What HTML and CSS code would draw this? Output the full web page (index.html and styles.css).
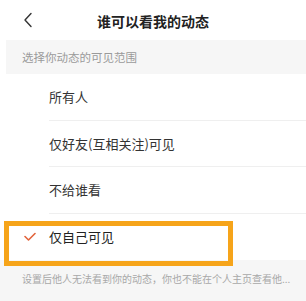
FILE: index.html
```html
<!DOCTYPE html>
<html lang="zh-CN">
<head>
  <meta charset="UTF-8">
  <meta name="viewport" content="width=device-width, initial-scale=1.0">
  <title>谁可以看我的动态</title>
  <link rel="stylesheet" href="styles.css">
</head>
<body>
  <div class="page">
    <div class="topbar">
      <span class="back">
        <svg width="10" height="16" viewBox="0 0 10 16"><path d="M8 1.5 L2 8 L8 14.5" fill="none" stroke="#333" stroke-width="1.4" stroke-linecap="round" stroke-linejoin="round"/></svg>
      </span>
      <h1>谁可以看我的动态</h1>
    </div>

    <div class="section-label">选择你动态的可见范围</div>

    <ul class="options">
      <li><span class="check"></span><span class="text">所有人</span></li>
      <li><span class="check"></span><span class="text">仅好友(互相关注)可见</span></li>
      <li><span class="check"></span><span class="text">不给谁看</span></li>
      <li class="selected">
        <span class="check">
          <svg width="12" height="10" viewBox="0 0 12 10"><path d="M1 4.5 L4.5 8 L11 1.5" fill="none" stroke="#e2643c" stroke-width="1.6" stroke-linecap="round" stroke-linejoin="round"/></svg>
        </span>
        <span class="text">仅自己可见</span>
        <div class="mark"></div>
      </li>
    </ul>

    <div class="footer">
      <p class="tip">设置后他人无法看到你的动态，你也不能在个人主页查看他...</p>
    </div>
  </div>
</body>
</html>
```

FILE: styles.css
```css
* {
  margin: 0;
  padding: 0;
  box-sizing: border-box;
}

body {
  font-family: "Noto Sans CJK SC", "Noto Sans", sans-serif;
  background: #fff;
  width: 306px;
  height: 301px;
  overflow: hidden;
}

.page {
  display: flex;
  flex-direction: column;
  height: 301px;
}

.topbar {
  height: 40px;
  display: flex;
  align-items: center;
  justify-content: center;
  position: relative;
  background: #fff;
}

.back {
  position: absolute;
  left: 23px;
  top: 12px;
  display: flex;
}

.topbar h1 {
  font-size: 14px;
  font-weight: bold;
  color: #222;
  margin-top: 2px;
}

.section-label {
  height: 34px;
  margin-left: 6px;
  padding-left: 16px;
  background: #f6f6f6;
  color: #9a9a9a;
  font-size: 11.5px;
  display: flex;
  align-items: center;
}

.options {
  list-style: none;
  background: #fff;
}

.options li {
  height: 46.5px;
  display: flex;
  align-items: center;
  position: relative;
}

.options li .check {
  width: 49px;
  display: flex;
  justify-content: flex-end;
  padding-right: 13px;
}

.options li .text {
  flex: 1;
  height: 100%;
  display: flex;
  align-items: center;
  font-size: 13px;
  color: #333;
  border-bottom: 1px solid #efefef;
}

.options li.selected .text {
  border-bottom: none;
  color: #222;
}

.mark {
  position: absolute;
  left: 4px;
  top: 7px;
  width: 229px;
  height: 45px;
  border: 5px solid #f6a41a;
}

.footer {
  flex: 1;
  background: #f6f6f6;
}

.tip {
  padding: 11px 0 0 22px;
  font-size: 10px;
  color: #a8a8a8;
  white-space: nowrap;
}
```
